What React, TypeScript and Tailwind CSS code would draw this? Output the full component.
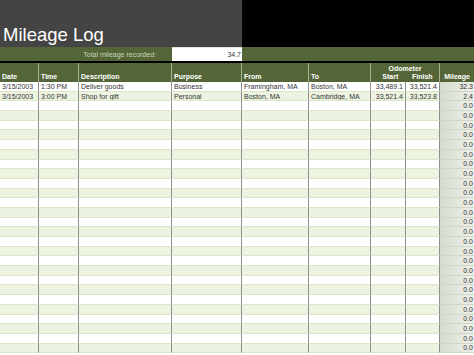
import React from "react";

const cols = "grid grid-cols-[39px_40px_93px_70px_67px_62px_35px_34px_34px]";

type Row = {
  date: string;
  time: string;
  desc: string;
  purpose: string;
  from: string;
  to: string;
  start: string;
  finish: string;
  mileage: string;
};

const data: Row[] = [
  { date: "3/15/2003", time: "1:30 PM", desc: "Deliver goods", purpose: "Business", from: "Framingham, MA", to: "Boston, MA", start: "33,489.1", finish: "33,521.4", mileage: "32.3" },
  { date: "3/15/2003", time: "3:00 PM", desc: "Shop for gift", purpose: "Personal", from: "Boston, MA", to: "Cambridge, MA", start: "33,521.4", finish: "33,523.8", mileage: "2.4" },
];

const rows: Row[] = Array.from({ length: 28 }, (_, i) =>
  data[i] ?? { date: "", time: "", desc: "", purpose: "", from: "", to: "", start: "", finish: "", mileage: "0.0" }
);

export default function App() {
  return (
    <div className="w-[474px] h-[355px] overflow-hidden bg-white font-['Liberation_Sans',Arial,sans-serif] text-[7px] leading-none text-[#333]">
      {/* Top title band */}
      <div className="flex h-[47px]">
        <div className="w-[242px] bg-[#444444] flex items-end pl-[3px] pb-[3px]">
          <span className="text-white text-[18.5px] leading-none">Mileage Log</span>
        </div>
        <div className="flex-1 bg-black" />
      </div>

      {/* Total mileage bar */}
      <div className="flex h-[14px] bg-[#546638]">
        <div className="w-[172px] flex items-center justify-end pr-[16px] text-[#c9d2b8]">
          Total mileage recorded:
        </div>
        <div className="w-[70px] bg-white flex items-center justify-end pr-[1px] text-[#333] border-t border-[#dfe3d8]">
          34.7
        </div>
        <div className="flex-1" />
      </div>
      <div className="h-[2px] bg-black" />

      {/* Header */}
      <div className={`${cols} h-[19px] bg-[#546638] text-white font-bold`}>
        <div className="flex items-end pl-[2px] pb-[2px] border-r border-[#a7b292]">Date</div>
        <div className="flex items-end pl-[2px] pb-[2px] border-r border-[#a7b292]">Time</div>
        <div className="flex items-end pl-[2px] pb-[2px] border-r border-[#a7b292]">Description</div>
        <div className="flex items-end pl-[2px] pb-[2px] border-r border-[#a7b292]">Purpose</div>
        <div className="flex items-end pl-[2px] pb-[2px] border-r border-[#a7b292]">From</div>
        <div className="flex items-end pl-[2px] pb-[2px] border-r border-[#a7b292]">To</div>
        <div className="col-span-2 flex flex-col border-r border-[#a7b292]">
          <div className="flex-1 flex items-center justify-center pt-[1px]">Odometer</div>
          <div className="flex pb-[2px]">
            <div className="w-[35px] text-center pl-[4px]">Start</div>
            <div className="w-[34px] text-center">Finish</div>
          </div>
        </div>
        <div className="flex items-end justify-center pb-[2px]">Mileage</div>
      </div>

      {/* Rows */}
      <div className="flex flex-col">
        {rows.map((r, i) => {
          const bg = i % 2 === 0 ? "bg-white" : "bg-[#edf3e1]";
          const cell = "flex items-center overflow-hidden whitespace-nowrap border-r border-[#8e8e8e] border-b border-b-[#dbe5c8]";
          return (
            <div key={i} className={`${cols} h-[9.7px] ${bg}`}>
              <div className={`${cell} pl-[2px]`}>{r.date}</div>
              <div className={`${cell} pl-[2px]`}>{r.time}</div>
              <div className={`${cell} pl-[2px]`}>{r.desc}</div>
              <div className={`${cell} pl-[2px]`}>{r.purpose}</div>
              <div className={`${cell} pl-[2px]`}>{r.from}</div>
              <div className={`${cell} pl-[2px]`}>{r.to}</div>
              <div className={`${cell} justify-end pr-[2px]`}>{r.start}</div>
              <div className={`${cell} justify-end pr-[2px]`}>{r.finish}</div>
              <div className="flex items-center justify-end pr-[1px] bg-gradient-to-r from-[#d6ddcf] to-[#edf0e9] border-b border-[#cfd8c6]">
                {r.mileage}
              </div>
            </div>
          );
        })}
      </div>
    </div>
  );
}
